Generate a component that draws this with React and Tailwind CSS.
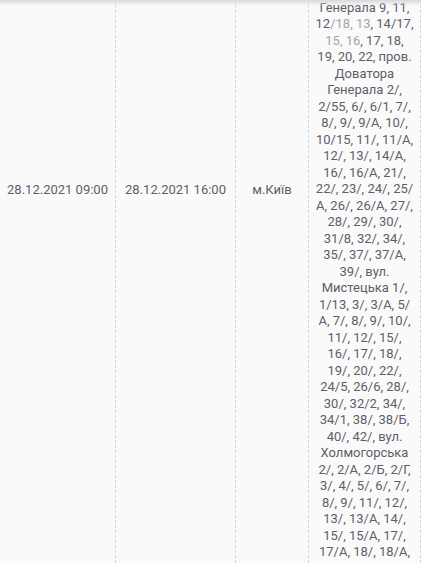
import React from "react";

const L = "text-[#a5a5ad]";

const lines = [
  ["Генерала 9, 11,"],
  [["12"], ["/18, 13", L], [", 14/17,"]],
  [["15, 16", L], [", 17, 18,"]],
  ["19, 20, 22, пров."],
  ["Доватора"],
  ["Генерала 2/,"],
  ["2/55, 6/, 6/1, 7/,"],
  ["8/, 9/, 9/А, 10/,"],
  ["10/15, 11/, 11/А,"],
  ["12/, 13/, 14/А,"],
  ["16/, 16/А, 21/,"],
  ["22/, 23/, 24/, 25/"],
  ["А, 26/, 26/А, 27/,"],
  ["28/, 29/, 30/,"],
  ["31/8, 32/, 34/,"],
  ["35/, 37/, 37/А,"],
  ["39/, вул."],
  ["Мистецька 1/,"],
  ["1/13, 3/, 3/А, 5/"],
  ["А, 7/, 8/, 9/, 10/,"],
  ["11/, 12/, 15/,"],
  ["16/, 17/, 18/,"],
  ["19/, 20/, 22/,"],
  ["24/5, 26/6, 28/,"],
  ["30/, 32/2, 34/,"],
  ["34/1, 38/, 38/Б,"],
  ["40/, 42/, вул."],
  ["Холмогорська"],
  ["2/, 2/А, 2/Б, 2/Г,"],
  ["3/, 4/, 5/, 6/, 7/,"],
  ["8/, 9/, 11/, 12/,"],
  ["13/, 13/А, 14/,"],
  ["15/, 15/А, 17/,"],
  ["17/А, 18/, 18/А,"],
];

function Line({ l }) {
  if (typeof l[0] === "string") return <div className="whitespace-nowrap">{l[0]}</div>;
  return (
    <div className="whitespace-nowrap">
      {l.map((p, i) => (
        <span key={i} className={p[1] || ""}>
          {p[0]}
        </span>
      ))}
    </div>
  );
}

export default function App() {
  return (
    <div
      className="relative w-[421px] h-[563px] overflow-hidden bg-[#fafafa] text-[#5e5e6a] text-[13px] leading-[16.5px]"
      style={{ fontFamily: "Roboto, 'Noto Sans', sans-serif" }}
    >
      <div className="grid grid-cols-[116px_120px_73px_112px] h-full">
        <div className="border-r border-dashed border-[#d6d6d6] text-center pt-[182px] whitespace-nowrap">
          28.12.2021 09:00
        </div>
        <div className="border-r border-dashed border-[#d6d6d6] text-center pt-[182px] whitespace-nowrap">
          28.12.2021 16:00
        </div>
        <div className="border-r border-dashed border-[#d6d6d6] text-center pt-[182px] whitespace-nowrap">
          м.Київ
        </div>
        <div className="border-r border-dashed border-[#d6d6d6] text-center -mt-[0.5px] flex flex-col items-center">
          {lines.map((l, i) => (
            <Line key={i} l={l} />
          ))}
        </div>
      </div>
      <div className="absolute inset-x-0 top-0 h-[6px] bg-linear-to-b from-[#d9d9d9] to-transparent" />
    </div>
  );
}
